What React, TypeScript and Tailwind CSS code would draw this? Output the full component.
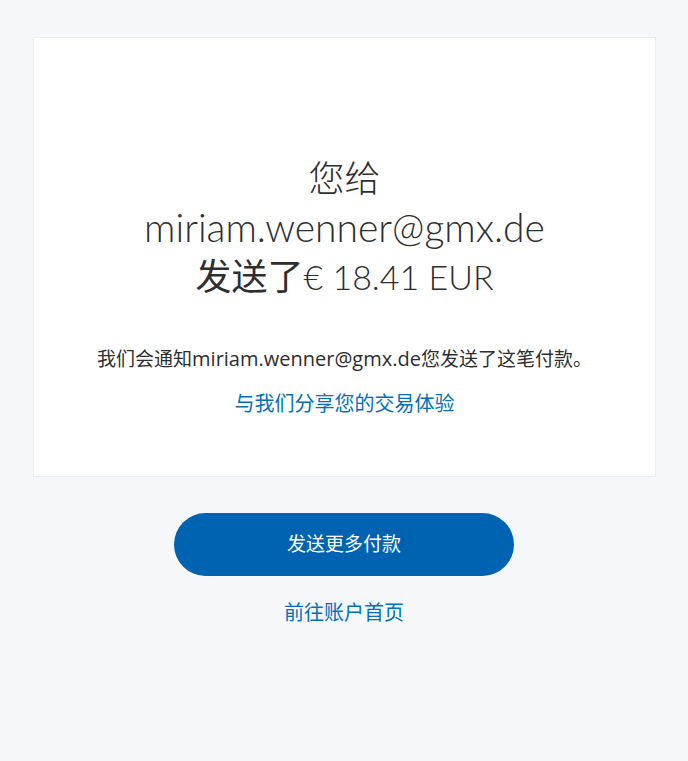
import React from 'react'

const App = () => {
    const email = 'miriam.wenner@gmx.de'

    return (
        <div className="min-h-[761px] bg-[#f5f7fa] pt-[37px] text-[#2c2e2f] font-['Open_Sans','Noto_Sans_CJK_SC',sans-serif]">
            <div className="ml-[33px] mr-[32px] border border-[#eaedf0] bg-white pt-[116px] pb-[59px] px-6 text-center">
                <h1 className="text-[36px] leading-[49px] font-light font-['Lato','Noto_Sans_CJK_SC',sans-serif]">
                    <div>您给</div>
                    <div className="text-[39px]">{email}</div>
                    <div>
                        <span className="font-normal">发送了</span>
                        <span className="font-light text-[34px]">€ 18.41 EUR</span>
                    </div>
                </h1>
                <p className="mt-[46px] text-[19px] leading-[24px]">
                    我们会通知<span className="text-[20px] leading-[24px]">{email}</span>您发送了这笔付款。
                </p>
                <a href="#" className="inline-block mt-[21px] text-[20px] leading-[24px] text-[#0070ba]">
                    与我们分享您的交易体验
                </a>
            </div>

            <div className="flex flex-col items-center mt-[36px]">
                <button className="w-[340px] h-[63px] rounded-full bg-[#0063b1] text-white text-[19px]">
                    发送更多付款
                </button>
                <a href="#" className="mt-[25px] text-[20px] leading-[24px] text-[#0070ba]">
                    前往账户首页
                </a>
            </div>
        </div>
    )
}

export default App
